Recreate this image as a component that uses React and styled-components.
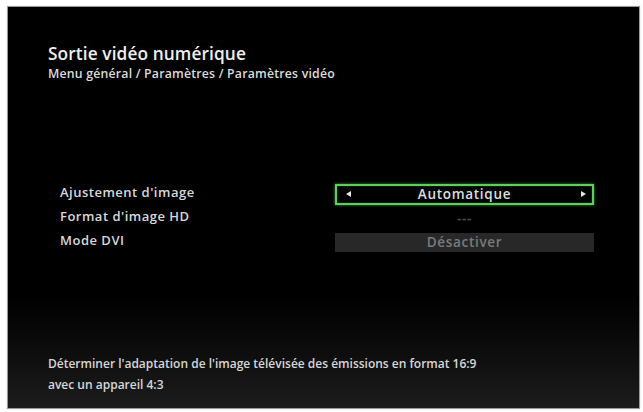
import React from "react";
import styled, { createGlobalStyle } from "styled-components";

const Global = createGlobalStyle`
  html, body { margin: 0; padding: 0; background: #ffffff; }
  body { width: 643px; height: 412px; overflow: hidden; font-family: "Open Sans", "DejaVu Sans", sans-serif; }
`;

const Page = styled.div`
  width: 643px;
  height: 412px;
  padding: 6px 3px 3px 7px;
  box-sizing: border-box;
  display: flex;
`;

const Screen = styled.div`
  flex: 1;
  display: flex;
  flex-direction: column;
  background: linear-gradient(to bottom, #000 0%, #000 72%, #0d0d0d 86%, #1c1c1c 100%);
  border: 1px solid #9a9a9a;
  box-shadow: 0 0 1px #bbb;
  color: #e6e6e6;
  padding: 36px 0 0 40px;
  box-sizing: border-box;
`;

const Title = styled.h1`
  margin: 0;
  font-size: 17.3px;
  font-weight: 600;
  line-height: 22px;
  letter-spacing: 0.1px;
  color: #eeeeee;
`;

const Breadcrumb = styled.div`
  margin-top: 2px;
  font-size: 12.3px;
  font-weight: 600;
  line-height: 14px;
  letter-spacing: 0.2px;
  color: #dcdcdc;
`;

const List = styled.div`
  margin-top: 102px;
  display: flex;
  flex-direction: column;
  gap: 3px;
  padding-left: 12px;
  width: 535px;
`;

const Row = styled.div`
  display: grid;
  grid-template-columns: 275px 259px;
  align-items: center;
  height: 21px;
`;

const Label = styled.div`
  padding-bottom: 4px;
  font-size: 13px;
  font-weight: 600;
  letter-spacing: 0.5px;
  color: #d8d8d8;
`;

const Value = styled.div`
  position: relative;
  height: ${(p) => (p.$boxed ? "21px" : "19px")};
  box-sizing: border-box;
  display: flex;
  align-items: center;
  justify-content: center;
  font-size: 13.5px;
  font-weight: 600;
  letter-spacing: 0.7px;
  color: ${(p) => (p.$active ? "#dedede" : p.$dim ? "#505050" : "#7a7a7a")};
  background: ${(p) => (p.$bar ? "#282828" : "transparent")};
  border: ${(p) => (p.$active ? "2px solid #5fcf5c" : "none")};
  box-shadow: ${(p) => (p.$active ? "0 0 3px rgba(95,207,92,0.7), inset 0 0 2px rgba(95,207,92,0.5)" : "none")};
`;

const Arrow = styled.span`
  position: absolute;
  top: 50%;
  ${(p) => (p.$side === "left" ? "left: 9px;" : "right: 6px;")}
  width: 0;
  height: 0;
  margin-top: -3px;
  border-top: 3px solid transparent;
  border-bottom: 3px solid transparent;
  ${(p) => (p.$side === "left" ? "border-right: 5px solid #e8e8e8;" : "border-left: 5px solid #e8e8e8;")}
`;

const Spacer = styled.div`
  flex: 1;
`;

const Help = styled.p`
  margin: 0 0 13px 0;
  font-size: 12px;
  font-weight: 600;
  line-height: 21px;
  color: #d6d6d6;
`;

export default function App() {
  return (
    <>
      <Global />
      <Page>
        <Screen>
          <Title>Sortie vidéo numérique</Title>
          <Breadcrumb>Menu général / Paramètres / Paramètres vidéo</Breadcrumb>
          <List>
            <Row>
              <Label>Ajustement d'image</Label>
              <Value $boxed $active>
                <Arrow $side="left" />
                Automatique
                <Arrow $side="right" />
              </Value>
            </Row>
            <Row>
              <Label>Format d'image HD</Label>
              <Value $dim>---</Value>
            </Row>
            <Row>
              <Label>Mode DVI</Label>
              <Value $bar>Désactiver</Value>
            </Row>
          </List>
          <Spacer />
          <Help>
            Déterminer l'adaptation de l'image télévisée des émissions en format 16:9
            <br />
            avec un appareil 4:3
          </Help>
        </Screen>
      </Page>
    </>
  );
}
